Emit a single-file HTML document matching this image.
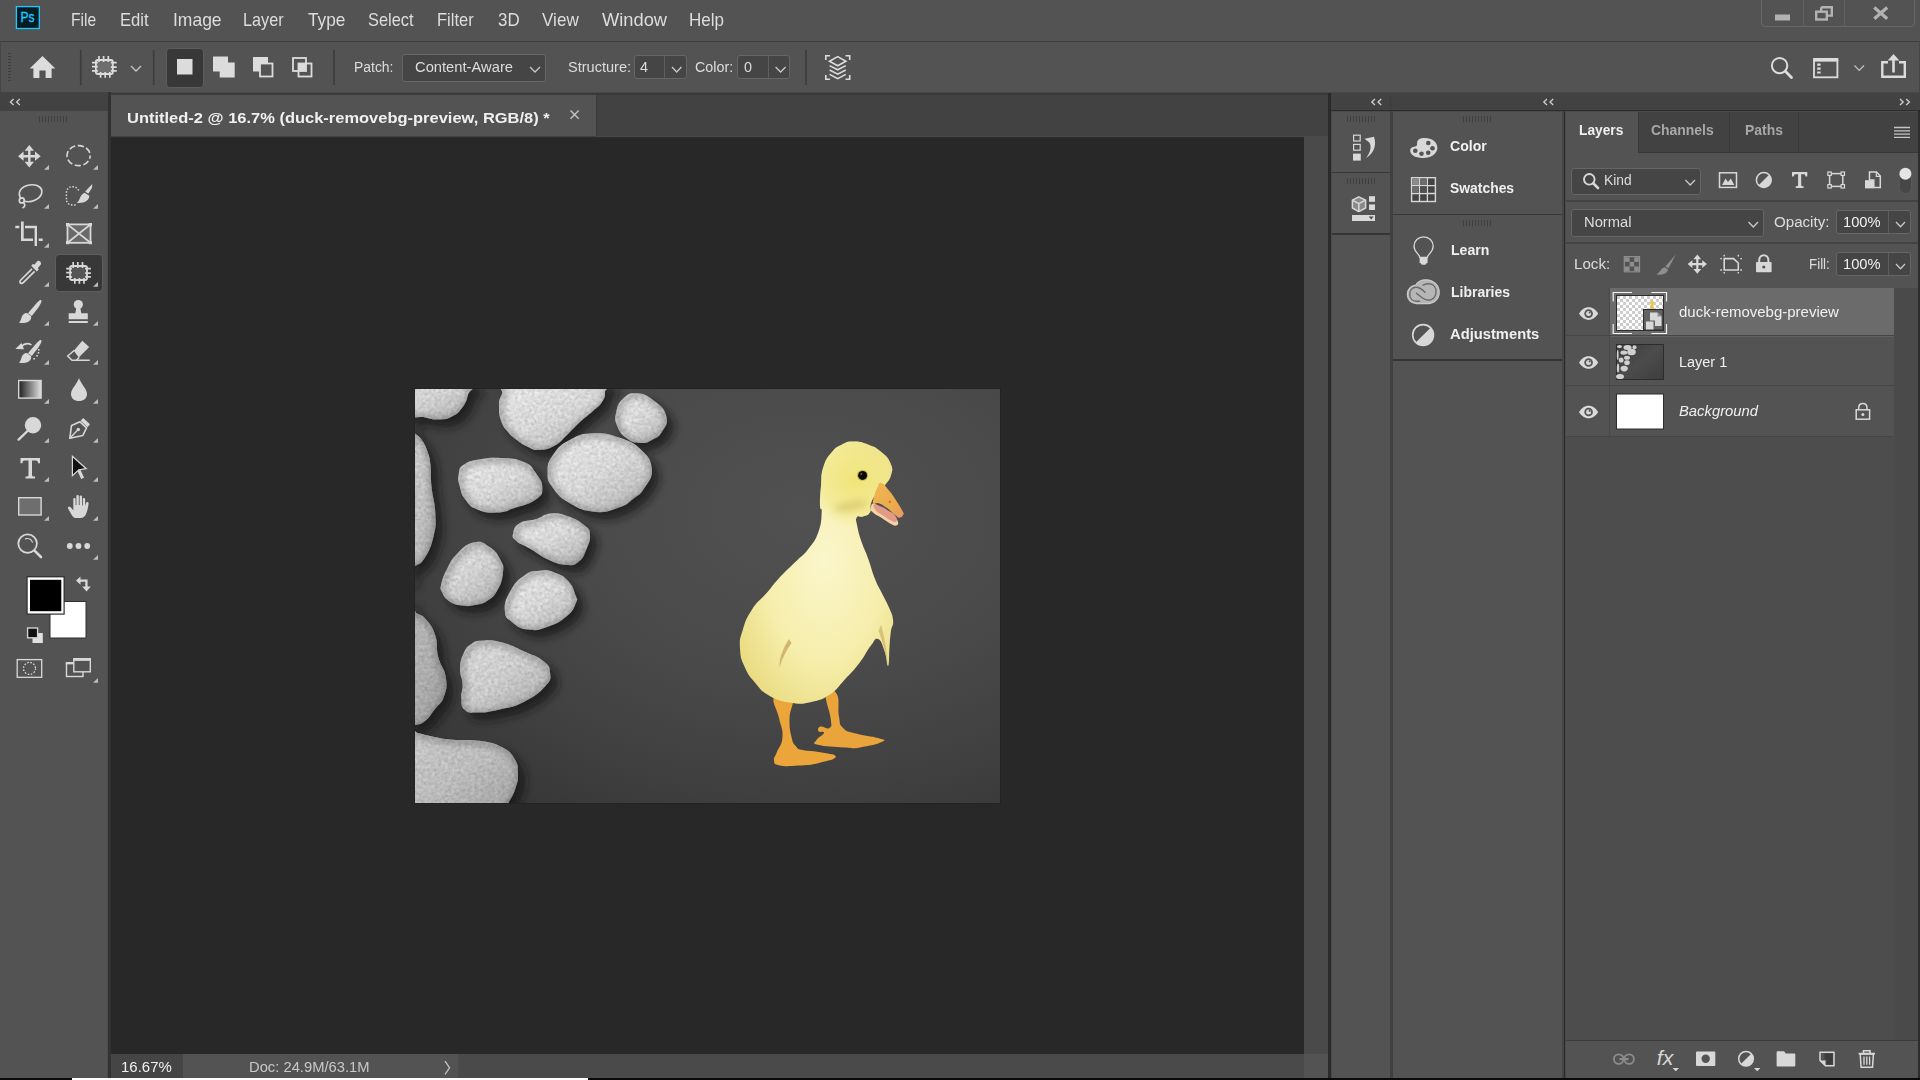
<!DOCTYPE html>
<html><head><meta charset="utf-8"><title>Photoshop</title>
<style>
*{margin:0;padding:0;box-sizing:border-box}
html,body{width:1920px;height:1080px;overflow:hidden;background:#535353;font-family:"Liberation Sans",sans-serif;color:#dcdcdc}
.a{position:absolute}
.t{position:absolute;white-space:nowrap;line-height:20px;transform-origin:0 50%}
.b{font-weight:bold}
.fld{position:absolute;background:#454545;border:1px solid #666;border-radius:3px}
svg{position:absolute;left:0;top:0;overflow:visible}
</style></head><body>
<!-- ===== base layout ===== -->
<div class="a" style="left:0;top:41px;width:1920px;height:1px;background:#3e3e3e"></div>
<div class="a" style="left:0;top:42px;width:1px;height:50px;background:#464646"></div>
<div class="a" style="left:1919px;top:42px;width:1px;height:50px;background:#464646"></div>
<!-- line under options bar -->
<div class="a" style="left:0;top:92px;width:1920px;height:1px;background:#484848"></div>
<div class="a" style="left:108px;top:93px;width:1221px;height:2px;background:#3a3a3a"></div>
<!-- toolbar header -->
<div class="a" style="left:0;top:92px;width:108px;height:19px;background:#424242"></div>
<div class="a" style="left:107px;top:111px;width:1px;height:967px;background:#4d4d4d"></div>
<div class="a" style="left:108px;top:92px;width:3px;height:988px;background:#323232"></div>
<!-- document tab bar -->
<div class="a" style="left:111px;top:95px;width:1218px;height:41px;background:#424242"></div>
<div class="a" style="left:111px;top:95px;width:485px;height:41px;background:#535353"></div>
<div class="a" style="left:596px;top:95px;width:1px;height:41px;background:#3a3a3a"></div>
<div class="a" style="left:111px;top:136px;width:1218px;height:1px;background:#4a4a4a"></div>
<div class="a" style="left:111px;top:136px;width:486px;height:1px;background:#404040"></div>
<div class="a" style="left:111px;top:137px;width:1193px;height:1px;background:#2c2c2c"></div>
<!-- canvas -->
<div class="a" style="left:111px;top:138px;width:1193px;height:916px;background:#282828"></div>
<!-- scrollbars -->
<div class="a" style="left:1304px;top:137px;width:24px;height:917px;background:#4a4a4a"></div>
<div class="a" style="left:458px;top:1054px;width:846px;height:24px;background:#4a4a4a"></div>
<div class="a" style="left:111px;top:1054px;width:72px;height:24px;background:#454545"></div>
<!-- column divider canvas | panels -->
<div class="a" style="left:1328px;top:93px;width:3px;height:987px;background:#2a2a2a"></div>
<div class="a" style="left:1331px;top:112px;width:1px;height:968px;background:#4a4a4a"></div>
<!-- collapsed strip 1 header -->
<div class="a" style="left:1331px;top:93px;width:589px;height:17px;background:#424242"></div>
<div class="a" style="left:1331px;top:110px;width:589px;height:1px;background:#2c2c2c"></div>
<div class="a" style="left:1331px;top:111px;width:589px;height:1px;background:#4a4a4a"></div>
<div class="a" style="left:1390px;top:97px;width:1px;height:13px;background:#3c3c3c"></div>
<div class="a" style="left:1332px;top:172px;width:58px;height:1px;background:#383838"></div>
<div class="a" style="left:1332px;top:233px;width:58px;height:2px;background:#353535"></div>
<!-- divider strip1 | panel2 -->
<div class="a" style="left:1390px;top:111px;width:3px;height:969px;background:#404040"></div>
<!-- panel 2 header -->
<div class="a" style="left:1393px;top:214px;width:169px;height:1px;background:#383838"></div>
<div class="a" style="left:1393px;top:359px;width:169px;height:2px;background:#353535"></div>
<!-- divider panel2 | layers -->
<div class="a" style="left:1562px;top:111px;width:2px;height:969px;background:#454545"></div>
<div class="a" style="left:1564px;top:111px;width:1px;height:969px;background:#2a2a2a"></div>
<div class="a" style="left:1565px;top:111px;width:1px;height:969px;background:#4a4a4a"></div>
<!-- layers panel header -->
<!-- layers tab row -->
<div class="a" style="left:1566px;top:112px;width:352px;height:41px;background:#424242"></div>
<div class="a" style="left:1566px;top:112px;width:72px;height:41px;background:#535353"></div>
<div class="a" style="left:1638px;top:112px;width:1px;height:40px;background:#383838"></div>
<div class="a" style="left:1729px;top:112px;width:1px;height:40px;background:#383838"></div>
<div class="a" style="left:1798px;top:112px;width:1px;height:40px;background:#383838"></div>
<div class="a" style="left:1638px;top:152px;width:280px;height:1px;background:#383838"></div>
<!-- layers panel right edge -->
<div class="a" style="left:1918px;top:111px;width:2px;height:969px;background:#2c2c2c"></div>
<!-- separators in layers panel -->
<div class="a" style="left:1566px;top:200px;width:352px;height:2px;background:#434343"></div>
<div class="a" style="left:1566px;top:242px;width:352px;height:2px;background:#434343"></div>
<!-- layer list area -->
<div class="a" style="left:1566px;top:288px;width:352px;height:752px;background:#4d4d4d"></div>
<div class="a" style="left:1894px;top:288px;width:24px;height:752px;background:#4a4a4a"></div>
<div class="a" style="left:1566px;top:288px;width:328px;height:148px;background:#535353"></div>
<div class="a" style="left:1610px;top:288px;width:284px;height:47px;background:#6b6b6b"></div>
<div class="a" style="left:1609px;top:288px;width:1px;height:148px;background:#484848"></div>
<div class="a" style="left:1566px;top:335px;width:328px;height:1px;background:#474747"></div>
<div class="a" style="left:1610px;top:336px;width:284px;height:1px;background:#626262"></div>
<div class="a" style="left:1566px;top:385px;width:328px;height:1px;background:#454545"></div>
<div class="a" style="left:1566px;top:436px;width:328px;height:1px;background:#454545"></div>
<!-- layers bottom bar -->
<div class="a" style="left:1566px;top:1040px;width:352px;height:1px;background:#3a3a3a"></div>
<div class="a" style="left:1566px;top:1041px;width:352px;height:37px;background:#535353"></div>
<!-- bottom black line + white stripe -->
<div class="a" style="left:0;top:1078px;width:1920px;height:2px;background:#0a0a0a"></div>
<div class="a" style="left:72px;top:1078px;width:516px;height:2px;background:#fff"></div>
<!-- ===== icons: menu bar + options bar ===== -->
<div class="fld" style="left:402px;top:54px;width:144px;height:28px"></div>
<div class="fld" style="left:634px;top:55px;width:53px;height:24px"></div>
<div class="a" style="left:664px;top:56px;width:1px;height:24px;background:#5e5e5e"></div>
<div class="fld" style="left:737px;top:55px;width:53px;height:24px"></div>
<div class="a" style="left:768px;top:56px;width:1px;height:24px;background:#5e5e5e"></div>
<div class="a" style="left:166px;top:48px;width:38px;height:40px;background:#383838;border:1px solid #5c5c5c;border-radius:4px"></div>
<svg width="1920" height="140" viewBox="0 0 1920 140">
<!-- Ps logo -->
<rect x="16.4" y="6.6" width="22.9" height="21.9" fill="#001d26" stroke="#1fc8fb" stroke-width="1.3"/>
<text x="20.6" y="22" font-family="Liberation Sans" font-size="14.8" fill="#1fc8fb" stroke="#1fc8fb" stroke-width="0.35" textLength="14" lengthAdjust="spacingAndGlyphs">Ps</text>
<!-- window controls -->
<path d="M1761.5 -1 V23 Q1761.5 26.5 1765 26.5 H1911 Q1914.5 26.5 1914.5 23 V-1" fill="none" stroke="#686868" stroke-width="1"/>
<path d="M1803.5 0 V26 M1844.5 0 V26" stroke="#626262" stroke-width="1"/>
<rect x="1775" y="14.5" width="15" height="6" fill="#b2b2b2"/>
<path d="M1821.2 7.2 H1831.8 V15.6 H1828 M1821.2 7.2 V11" fill="none" stroke="#b2b2b2" stroke-width="2.4"/>
<rect x="1816.2" y="11.7" width="10.6" height="7.8" fill="none" stroke="#b2b2b2" stroke-width="2.4"/>
<path d="M1874.3 7.5 L1887.2 18.7 M1887.2 7.5 L1874.3 18.7" stroke="#b2b2b2" stroke-width="3.2"/>
<!-- options grip -->
<path d="M8 53.5h3M8 56.5h3M8 59.5h3M8 62.5h3M8 65.5h3M8 68.5h3M8 71.5h3M8 74.5h3M8 77.5h3M8 80.5h3" stroke="#3e3e3e" stroke-width="1"/>
<!-- separators -->
<path d="M80.7 50V85M153.7 50V85M334 50V85M806 50V85" stroke="#3c3c3c" stroke-width="1.6"/>
<!-- home -->
<path d="M42.5 56 L55.3 68.6 H51.6 V78 H45.6 V70.4 H39.4 V78 H33.4 V68.6 H29.7 Z" fill="#dcdcdc"/>
<!-- patch tool icon (options) -->
<g id="patchico" stroke="#dcdcdc" stroke-width="1.7" fill="none">
<rect x="95.9" y="60" width="16.9" height="14" rx="1.8" fill="#6e6e6e" stroke-width="1.8"/>
<path d="M99 56V62M103.6 56V62M108.3 56V62M100.6 72V77.8M105.2 72V77.8M109.8 72V77.8M92 62.7H97.8M92 66.6H97.8M92 70.9H97.8M110.9 62.7H116.7M110.9 67.2H116.7M110.9 70.9H116.7"/>
</g>
<path d="M131 66 L136 71 L141 66" fill="none" stroke="#c8c8c8" stroke-width="1.3"/>
<!-- selection mode buttons -->
<rect x="177" y="59" width="15.5" height="15.5" fill="#dcdcdc"/>
<path d="M213 56.5h15v6h6.7v15h-15v-6H213z" fill="#dcdcdc"/>
<rect x="253" y="57" width="15" height="14.5" fill="#dcdcdc"/>
<rect x="260" y="63.5" width="12.5" height="13" fill="#535353" stroke="#dcdcdc" stroke-width="1.8"/>
<rect x="298.5" y="63.5" width="7.5" height="7.5" fill="#dcdcdc"/>
<rect x="293" y="58" width="13" height="13" fill="none" stroke="#dcdcdc" stroke-width="1.8"/>
<rect x="298.5" y="63.5" width="13" height="13" fill="none" stroke="#dcdcdc" stroke-width="1.8"/>
<!-- dropdown chevrons -->
<path d="M530 67 L535 72 L540 67 M672 67 L676.7 72 L681.4 67 M775.6 67 L780.6 72 L785.6 67" fill="none" stroke="#c8c8c8" stroke-width="1.3"/>
<!-- sample all layers icon -->
<g fill="none" stroke="#dcdcdc" stroke-width="1.6">
<path d="M825.8 60V55.8H830M845.5 55.8H849.7V60M825.8 75V79.2H830M845.5 79.2H849.7V75"/>
<path d="M837.7 56.6 L845.9 61.2 L837.7 65.8 L829.5 61.2 Z"/>
<path d="M829.6 65.6 L837.7 69.8 L845.8 65.6M829.6 70 L837.7 74.2 L845.8 70M829.6 74.4 L837.7 78.6 L845.8 74.4"/>
</g>
<!-- right side: search / workspace / share -->
<circle cx="1779.6" cy="65.6" r="7.7" fill="none" stroke="#dcdcdc" stroke-width="2"/>
<path d="M1785.3 71.3 L1791.5 77.6" stroke="#dcdcdc" stroke-width="2.8" stroke-linecap="round"/>
<rect x="1814" y="60.5" width="23.4" height="16.8" fill="none" stroke="#dcdcdc" stroke-width="1.8"/>
<rect x="1813.1" y="58" width="25.2" height="3.4" fill="#dcdcdc"/>
<path d="M1817.2 64.7h3.4M1817.2 68.6h3.4M1817.2 72.5h3.4" stroke="#dcdcdc" stroke-width="2.2"/>
<path d="M1854.5 65.5 L1859.2 70.4 L1864 65.5" fill="none" stroke="#c0c0c0" stroke-width="1.3"/>
<path d="M1888 62.2 H1882.3 V76.8 H1904.8 V62.2 H1899" fill="none" stroke="#dcdcdc" stroke-width="2.4"/>
<path d="M1893.5 72.5 V58" stroke="#dcdcdc" stroke-width="2.6"/>
<path d="M1893.5 54 L1899.3 60.6 H1887.7 Z" fill="#dcdcdc"/>
<!-- doc tab close -->
<path d="M570.5 110.5 L578.7 118.7 M578.7 110.5 L570.5 118.7" stroke="#c4c4c4" stroke-width="1.4"/>
<!-- collapse chevrons -->
<g fill="none" stroke="#d0d0d0" stroke-width="1.3">
<path d="M13.6 99 L10.4 102 L13.6 105 M19.8 99 L16.6 102 L19.8 105"/>
<path d="M1375 99 L1371.8 102 L1375 105 M1381.2 99 L1378 102 L1381.2 105"/>
<path d="M1547 99 L1543.8 102 L1547 105 M1553.2 99 L1550 102 L1553.2 105"/>
<path d="M1900 99 L1903.2 102 L1900 105 M1906.2 99 L1909.4 102 L1906.2 105"/>
</g>
<!-- grips -->
<g stroke="#3f3f3f" stroke-width="1">
<path d="M39.5 116v6M42.5 116v6M45.5 116v6M48.5 116v6M51.5 116v6M54.5 116v6M57.5 116v6M60.5 116v6M63.5 116v6M66.5 116v6"/>
<path d="M1347.5 116v6M1350.5 116v6M1353.5 116v6M1356.5 116v6M1359.5 116v6M1362.5 116v6M1365.5 116v6M1368.5 116v6M1371.5 116v6M1374.5 116v6"/>
<path d="M1463.5 116v6M1466.5 116v6M1469.5 116v6M1472.5 116v6M1475.5 116v6M1478.5 116v6M1481.5 116v6M1484.5 116v6M1487.5 116v6M1490.5 116v6"/>
</g>
</svg>
<svg id="statuschev" width="1920" height="1080" viewBox="0 0 1920 1080"><path d="M445 1061.200 L449.600 1067.800 L445 1074.400" fill="none" stroke="#c8c8c8" stroke-width="1.200"/></svg>
<!-- ===== icons: left toolbar ===== -->
<div class="a" style="left:55px;top:254px;width:48px;height:38px;background:#383838;border:1px solid #5e5e5e;border-radius:4px"></div>
<svg width="120" height="700" viewBox="0 0 120 700">
<defs>
<path id="tri" d="M0 4.7 H5 V0 Z" fill="#bdbdbd"/>
<linearGradient id="gradtool" x1="0" x2="1" y1="0" y2="0"><stop offset="0" stop-color="#1e1e1e"/><stop offset="1" stop-color="#e0e0e0"/></linearGradient>
</defs>
<g fill="#d8d8d8">
<!-- corner triangles -->
<use href="#tri" x="44" y="165"/><use href="#tri" x="93" y="165"/>
<use href="#tri" x="44" y="204"/><use href="#tri" x="93" y="204"/>
<use href="#tri" x="44" y="243"/>
<use href="#tri" x="44" y="282"/><use href="#tri" x="93" y="282"/>
<use href="#tri" x="44" y="321"/><use href="#tri" x="93" y="321"/>
<use href="#tri" x="44" y="360"/><use href="#tri" x="93" y="360"/>
<use href="#tri" x="44" y="399"/><use href="#tri" x="93" y="399"/>
<use href="#tri" x="44" y="438"/><use href="#tri" x="93" y="438"/>
<use href="#tri" x="44" y="477"/><use href="#tri" x="93" y="477"/>
<use href="#tri" x="44" y="516"/><use href="#tri" x="93" y="516"/>
<use href="#tri" x="93" y="555"/>
<use href="#tri" x="93" y="678"/>
<!-- 1 move -->
<path d="M29.3 145 L34 150.8 H30.5 V155 H35 V151.6 L40.7 156.2 L35 160.8 V157.4 H30.5 V161.8 H34 L29.3 167.5 L24.6 161.8 H28.1 V157.4 H23.6 V160.8 L18 156.2 L23.6 151.6 V155 H28.1 V150.8 H24.6 Z"/>
<!-- 2 elliptical marquee -->
<ellipse cx="78.6" cy="155.6" rx="11.6" ry="10" fill="none" stroke="#d8d8d8" stroke-width="1.6" stroke-dasharray="6.2 2.6" stroke-dashoffset="3"/>
<!-- 3 lasso -->
<g fill="none" stroke="#d8d8d8" stroke-width="1.7">
<path d="M21.5 199 C16.5 193 20.5 186.5 29.5 185 C38 183.700 43 188 41.600 193.500 C40 199 31 203.500 23.500 201"/>
<circle cx="21.800" cy="200.400" r="2.500"/>
<path d="M23.200 202.400 C25.500 204.500 25.500 206.500 22.500 208"/>
</g>
<!-- 4 quick selection -->
<path d="M78.600 190.600 C77.600 187.600 74.600 186.400 71.500 186.700 C68 187.100 66.400 190 66.400 193.500 V199 C66.400 202.500 68.600 204.900 72 204.900 H76" fill="none" stroke="#d8d8d8" stroke-width="1.500" stroke-dasharray="1.500 1.650"/>
<path d="M92.300 184.100 L92 187.800 L88.300 193.700 L85.100 191.600 Z"/>
<path d="M84.600 192.700 L89.300 195.800 C89.600 200 84.600 203.800 76.500 202.900 C80.500 200.600 79.300 194.800 84.600 192.700 Z"/>
<!-- 5 crop -->
<path d="M21 221.500 H23.700 V238.500 H33 V241 H21 Z M15.300 225.700 H19.300 V228.300 H15.300 Z M25 225.700 H37 V246 H34.600 V228.300 H25 Z M38.700 238.500 H42.700 V241 H38.700 Z"/>
<!-- 6 frame -->
<g stroke="#d8d8d8" stroke-width="1.800" fill="none">
<rect x="67.500" y="224.400" width="23" height="18.400" fill="#6a6a6a"/>
<path d="M67.500 224.400 L90.500 242.800 M90.500 224.400 L67.500 242.800"/>
</g>
<path d="M66 223h3.200v3.200H66z M88.800 223H92v3.200h-3.200z M66 241h3.200v3.200H66z M88.800 241H92v3.200h-3.200z"/>
<!-- 7 eyedropper -->
<path d="M37.500 261 C39.500 260.300 41.500 262.300 41 264.300 L37.800 268.200 L38.800 269.400 L36.800 271.400 L31.200 265.800 L33.200 263.800 L34.300 264.800 Z"/>
<path d="M32 268.800 L20.800 280 C19.600 281.200 19.800 282.600 20.500 283 C21.200 283.600 22.500 283.300 23.500 282.300 L34.600 271.300" fill="none" stroke="#d8d8d8" stroke-width="1.700"/>
<!-- 8 patch (selected) -->
<g stroke="#d8d8d8" stroke-width="1.700" fill="none" transform="translate(-25.800 206)">
<rect x="95.900" y="60" width="16.900" height="14" rx="1.800" fill="#555" stroke-width="1.800"/>
<path d="M99 56V62M103.600 56V62M108.300 56V62M100.600 72V77.800M105.200 72V77.800M109.800 72V77.800M92 62.700H97.800M92 66.600H97.800M92 70.900H97.800M110.900 62.700H116.700M110.900 67.200H116.700M110.900 70.900H116.700"/>
</g>
<!-- 9 brush -->
<path id="brush" d="M41.200 300 C42.200 300.800 40.800 304 38.600 307.200 L31.800 316 L28 313.300 L35.600 304.200 C38 301.400 40.200 299.400 41.200 300 Z M25.800 313.100 C27 312.900 27.600 313.400 28.200 313.900 L31 316 C32.400 320.800 27 323.900 19 322.800 C21.800 321 20.800 314.200 25.800 313.100 Z"/>
<!-- 10 stamp -->
<circle cx="78.300" cy="304.600" r="4.600"/>
<path d="M76.300 308 H80.300 L81.300 313.200 H87.800 V319.300 H68.700 V313.200 H75.300 Z M68.700 321 H87.800 V323 H68.700 Z"/>
<!-- 11 history brush -->
<use href="#brush" y="40"/>
<path d="M15.300 349 L21.500 343 L24 349.300 Z"/>
<path d="M21.500 346.600 C24 343.600 28 343 31.500 344.800" fill="none" stroke="#d8d8d8" stroke-width="1.500"/>
<rect x="37.900" y="349" width="1.600" height="1.600"/><rect x="37.700" y="352" width="1.600" height="1.600"/><rect x="36.200" y="355" width="1.600" height="1.600"/><rect x="33.300" y="358" width="1.600" height="1.600"/>
<!-- 12 eraser -->
<path d="M82.300 340.800 L89.200 347 L78.800 357.400 L73.800 350.800 Z"/>
<path d="M74.400 350.300 L67.700 356 L72 360.300 H89.800 M79.200 357.200 L76.300 360.300" fill="none" stroke="#d8d8d8" stroke-width="1.500"/>
<!-- 13 gradient -->
<rect x="18.700" y="380.500" width="22.400" height="17.600" fill="url(#gradtool)" stroke="#d8d8d8" stroke-width="1.400"/>
<!-- 14 drop -->
<path d="M79 378 C81 384 87 389 87 394 C87 398.500 83.500 401 79 401 C74.500 401 71 398.500 71 394 C71 389 77 384 79 378 Z"/>
<!-- 15 dodge -->
<circle cx="33" cy="425.200" r="8.200"/>
<path d="M27.500 431 L18.600 439.600" stroke="#d8d8d8" stroke-width="2.400" stroke-linecap="round"/>
<!-- 16 pen -->
<path d="M83.200 418 L90 424.300 L87.500 427.200 L80.600 420.800 Z"/>
<path d="M80 421.800 L86.500 427.800 L82.800 435.500 L69.800 438.300 L71.500 425.600 Z" fill="none" stroke="#d8d8d8" stroke-width="1.600" stroke-linejoin="round"/>
<path d="M70 438 L77.500 430.300" stroke="#d8d8d8" stroke-width="1.300"/>
<circle cx="78.300" cy="429.500" r="1.700"/>
<!-- 17 type -->
<path d="M20.500 458 H40 V463.300 H38 C37.900 461.300 37.300 460.600 35.700 460.600 H32 V475 C32 476.300 32.700 476.600 35 476.600 V478.600 H25.500 V476.600 C27.800 476.600 28.500 476.300 28.500 475 V460.600 H24.800 C23.200 460.600 22.600 461.300 22.500 463.300 H20.500 Z"/>
<!-- 18 path selection -->
<path d="M79 470.400 L82.600 478.400" stroke="#d8d8d8" stroke-width="3.200" fill="none"/>
<path d="M72.400 456.300 L86.200 468.700 L78.800 469.800 L72.400 475.600 Z" fill="#111" stroke="#d8d8d8" stroke-width="1.200"/>
<!-- 19 rectangle -->
<rect x="18.700" y="497.700" width="22.400" height="17.300" fill="#6e6e6e" stroke="#d8d8d8" stroke-width="1.400"/>
<!-- 20 hand -->
<path d="M74.800 518 C72.500 517 71.500 514.500 69.800 511.500 C68.600 509.400 67.500 508 68 507.200 C68.800 506.200 70.300 506.800 71.400 508 L73.300 510.400 V499.300 C73.300 497.600 75.600 497.600 75.600 499.300 V505 H76.400 V496.300 C76.400 494.500 78.800 494.500 78.800 496.300 V505 H79.600 V496.800 C79.600 495 82 495 82 496.800 V505.400 H82.800 V499.300 C82.800 497.600 85.100 497.600 85.100 499.300 V505.800 L86 503 C86.600 501.200 88.800 501.800 88.600 503.600 C88.200 507.500 87.200 511.500 85.800 514.500 C84.800 516.600 83 518 80.800 518 Z"/>
<!-- 21 zoom -->
<circle cx="27.600" cy="543.600" r="9.300" fill="none" stroke="#d8d8d8" stroke-width="1.800"/>
<path d="M34.500 550.600 L41 557" stroke="#d8d8d8" stroke-width="2.600" stroke-linecap="round"/>
<path d="M25 538.800 C28.500 537.800 31.500 539.500 32.600 542.500" fill="none" stroke="#d8d8d8" stroke-width="1.200"/>
<!-- 22 dots -->
<circle cx="69.800" cy="546" r="2.900"/><circle cx="78.500" cy="546" r="2.900"/><circle cx="87.200" cy="546" r="2.900"/>
</g>
<!-- color swatches -->
<rect x="50" y="601.500" width="36" height="36.500" fill="#fff" stroke="#2e2e2e" stroke-width="1"/>
<rect x="26.500" y="576.200" width="38.200" height="38.500" fill="#2e2e2e"/>
<rect x="27.700" y="577.400" width="35.800" height="36.100" fill="#fff"/>
<rect x="30" y="579.800" width="31.300" height="31.400" fill="#000"/>
<!-- default colors -->
<rect x="32.500" y="633" width="10.300" height="10" fill="#e0e0e0"/>
<rect x="27.600" y="628" width="10" height="9.800" fill="#111" stroke="#d0d0d0" stroke-width="1.400"/>
<!-- swap -->
<g fill="#d8d8d8">
<path d="M76 580.600 L80.500 576.500 V579.500 H87.600 V586.500 H90.800 L86.500 591.500 L82.200 586.500 H85.300 V581.800 H80.500 V584.800 Z"/>
</g>
<!-- quick mask -->
<rect x="17.200" y="659.600" width="24.500" height="17.700" fill="none" stroke="#d8d8d8" stroke-width="1.300"/>
<circle cx="29.500" cy="668.400" r="6" fill="none" stroke="#d8d8d8" stroke-width="1.300" stroke-dasharray="1.600 1.550"/>
<!-- screen mode -->
<rect x="66.500" y="663.500" width="16.500" height="13" fill="none" stroke="#d8d8d8" stroke-width="1.400"/>
<rect x="73.800" y="660" width="16.500" height="11.800" fill="#535353" stroke="#d8d8d8" stroke-width="1.400"/>
<rect x="73.100" y="658" width="17.900" height="2.600" fill="#d8d8d8"/>
<rect x="65.800" y="662" width="7.500" height="2.200" fill="#d8d8d8"/>
</svg>
<!-- ===== icons: collapsed strips + Color/Swatches/Learn/... panel ===== -->
<svg width="1920" height="400" viewBox="0 0 1920 400">
<g stroke="#3f3f3f" stroke-width="1">
<path d="M1347.5 178v6M1350.5 178v6M1353.5 178v6M1356.5 178v6M1359.5 178v6M1362.5 178v6M1365.5 178v6M1368.5 178v6M1371.5 178v6M1374.5 178v6"/>
<path d="M1463.5 220v6M1466.5 220v6M1469.5 220v6M1472.5 220v6M1475.5 220v6M1478.5 220v6M1481.5 220v6M1484.5 220v6M1487.5 220v6M1490.5 220v6"/>
</g>
<g fill="#d8d8d8">
<!-- history icon -->
<rect x="1353.600" y="135.200" width="6.600" height="5.800" fill="none" stroke="#d8d8d8" stroke-width="1.200"/>
<rect x="1353.600" y="144.400" width="6.600" height="5.800" fill="none" stroke="#d8d8d8" stroke-width="1.200"/>
<rect x="1353" y="153.600" width="7.800" height="7" />
<path d="M1364.500 138.700 L1374 136.800 C1376.200 143 1375.500 152.500 1366 158.200 C1370.500 152.500 1371.800 146.500 1369.300 142.600 Z"/>
<!-- 3D icon -->
<g fill="none" stroke="#d8d8d8" stroke-width="1.500" stroke-linejoin="round">
<path d="M1358.800 196.800 L1365.600 200.200 V208 L1358.800 211.600 L1352.400 208 V200.200 Z" fill="#8a8a8a"/>
<path d="M1352.400 200.200 L1358.800 203.600 L1365.600 200.200 M1358.800 203.600 V211.600"/>
</g>
<rect x="1369" y="196.200" width="6" height="5.600"/>
<rect x="1369" y="204.400" width="6" height="5.600"/>
<rect x="1352" y="215" width="23" height="6"/>
<path d="M1368.800 216.500 H1373.600 L1371.200 219.600 Z" fill="#444"/>
<!-- Color palette -->
<path d="M1423.500 138 C1431.500 137.600 1437.600 141.800 1437.400 148 C1437.200 154 1430.500 158.200 1422.600 158 C1415 157.800 1409.800 154.500 1410.200 150.200 C1410.500 147 1413.800 146.800 1415.800 146.200 C1418 145.500 1416.500 143.200 1417.500 141 C1418.400 139 1420.800 138.100 1423.500 138 Z"/>
<g fill="#535353">
<circle cx="1415.300" cy="150.700" r="2.300"/><circle cx="1421.500" cy="153.800" r="2.300"/><circle cx="1428.200" cy="152.800" r="2.300"/><circle cx="1432.500" cy="148.200" r="2.300"/><circle cx="1428.300" cy="143" r="2.300"/>
</g>
<!-- Swatches grid -->
<rect x="1411.600" y="177.700" width="23.800" height="23.800" fill="#444" stroke="#d8d8d8" stroke-width="1.400"/>
<path d="M1419.500 177.700 V201.500 M1427.400 177.700 V201.500 M1411.600 185.600 H1435.400 M1411.600 193.500 H1435.400" stroke="#d8d8d8" stroke-width="1.300" fill="none"/>
<rect x="1412.400" y="178.500" width="6.400" height="6.400" fill="#8c8c8c"/><rect x="1420.200" y="178.500" width="6.500" height="6.400" fill="#6c6c6c"/>
<rect x="1412.400" y="186.300" width="6.400" height="6.500" fill="#6c6c6c"/><rect x="1420.200" y="186.300" width="6.500" height="6.500" fill="#505050"/>
<!-- Learn bulb -->
<path d="M1419.800 257.300 C1419.500 254.200 1414 252 1414 246.300 C1414 240.800 1418.300 236.800 1423.600 236.800 C1428.900 236.800 1433.200 240.800 1433.200 246.300 C1433.200 252 1427.700 254.200 1427.400 257.300 Z" fill="none" stroke="#d8d8d8" stroke-width="1.300"/>
<path d="M1419.600 257.300 H1427.600 V262.300 L1425.300 264.800 H1421.900 L1419.600 262.300 Z"/>
<!-- Libraries CC -->
<path d="M1416.200 303.600 C1411 303.600 1407.300 299.600 1407.300 294.300 C1407.300 289.400 1410.800 285.600 1415.600 285.200 C1417.500 281.800 1421.500 279.700 1426.300 279.800 C1433.500 280 1439.200 285.300 1439.200 292.300 C1439.200 298.800 1434.300 303.600 1428 303.600 Z" fill="#b6b6b6" stroke="#cacaca" stroke-width="1.200"/>
<g fill="none" stroke="#6a6a6a" stroke-width="1.400" stroke-linecap="round">
<path d="M1425 292.300 C1421.500 288.500 1419 287.200 1416 287.200 C1412 287.200 1409.800 290.500 1409.800 294.500 C1409.800 298.500 1412.500 301.200 1416.500 301.200 H1419.500"/>
<path d="M1423 285.200 C1425 284.200 1427 283.800 1429 283.800 C1433.500 283.800 1436 287.500 1436 292 C1436 296.500 1433 300.200 1428.500 300.200 C1424 300.200 1420.500 296.500 1416.500 293.200"/>
</g>
<!-- Adjustments -->
<circle cx="1423.100" cy="335" r="10.400" fill="none" stroke="#d8d8d8" stroke-width="1.600"/>
<path d="M1430.600 327.800 A10.400 10.400 0 0 1 1415.700 342.400 Z"/>
</g>
</svg>
<!-- ===== Layers panel widgets ===== -->
<div class="fld" style="left:1571px;top:168px;width:130px;height:27px"></div>
<div class="fld" style="left:1571px;top:209px;width:193px;height:28px"></div>
<div class="fld" style="left:1836px;top:210px;width:75px;height:24px"></div>
<div class="a" style="left:1888px;top:211px;width:1px;height:24px;background:#5e5e5e"></div>
<div class="fld" style="left:1836px;top:252px;width:75px;height:24px"></div>
<div class="a" style="left:1888px;top:253px;width:1px;height:24px;background:#5e5e5e"></div>
<svg width="1920" height="1080" viewBox="0 0 1920 1080">
<defs>
<pattern id="chk" x="1617" y="296" width="6" height="6" patternUnits="userSpaceOnUse"><rect width="6" height="6" fill="#fff"/><rect width="3" height="3" fill="#ccc"/><rect x="3" y="3" width="3" height="3" fill="#ccc"/></pattern>
<linearGradient id="l1bg" x1="0" y1="0" x2="1" y2="1"><stop offset="0" stop-color="#3c3c3c"/><stop offset="0.5" stop-color="#4c4c4c"/><stop offset="1" stop-color="#3e3e3e"/></linearGradient>
<g id="eye"><path d="M0 0 C3 -4.800 6.500 -6.300 9.600 -6.300 C12.700 -6.300 16.200 -4.800 19.200 0 C16.200 4.800 12.700 6.300 9.600 6.300 C6.500 6.300 3 4.800 0 0 Z" fill="#dadada"/><circle cx="9.600" cy="0" r="4.300" fill="#535353"/><circle cx="9.600" cy="0" r="2.500" fill="#dadada"/><circle cx="10.600" cy="-1" r="1" fill="#535353"/></g>
</defs>
<!-- panel menu -->
<path d="M1894 127.500h16M1894 130.800h16M1894 134.100h16M1894 137.400h16" stroke="#c4c4c4" stroke-width="1.300"/>
<g fill="#d8d8d8">
<!-- kind search -->
<circle cx="1589.300" cy="179.300" r="5.300" fill="none" stroke="#d8d8d8" stroke-width="1.900"/>
<path d="M1593.200 183.300 L1598 188" stroke="#d8d8d8" stroke-width="2.600" stroke-linecap="round"/>
<path d="M1685.400 180 L1690.200 185 L1695 180 M1748.500 222 L1753.300 227 L1758 222 M1896 222 L1900.500 226.700 L1905 222 M1896 264 L1900.500 268.700 L1905 264" fill="none" stroke="#c8c8c8" stroke-width="1.300"/>
<!-- filter: pixel -->
<rect x="1719.500" y="172.800" width="17" height="14.600" fill="none" stroke="#d8d8d8" stroke-width="1.500"/>
<path d="M1722 185 L1725.600 178.500 L1728 182 L1730.800 178.500 L1734.300 185 Z"/>
<!-- filter: adjustment -->
<circle cx="1763.800" cy="180" r="7.400" fill="none" stroke="#d8d8d8" stroke-width="1.500"/>
<path d="M1769.200 174.800 A7.400 7.400 0 0 1 1758.600 185.300 Z"/>
<!-- filter: type -->
<path d="M1792 172 H1807.300 V176.600 H1805.500 C1805.400 174.800 1804.800 174.300 1803.400 174.300 H1801.200 V185 C1801.200 186 1801.800 186.300 1803.600 186.300 V188 H1795.700 V186.300 C1797.500 186.300 1798.100 186 1798.100 185 V174.300 H1795.900 C1794.500 174.300 1793.900 174.800 1793.800 176.600 H1792 Z"/>
<!-- filter: shape -->
<rect x="1829.600" y="173.600" width="13.200" height="12.800" fill="none" stroke="#d8d8d8" stroke-width="1.500"/>
<g fill="#535353" stroke="#d8d8d8" stroke-width="1.200"><rect x="1827.900" y="172" width="3.400" height="3.400"/><rect x="1841.100" y="172" width="3.400" height="3.400"/><rect x="1827.900" y="184.600" width="3.400" height="3.400"/><rect x="1841.100" y="184.600" width="3.400" height="3.400"/></g>
<!-- filter: smart object -->
<path d="M1869.500 172 H1876.500 L1880.300 176 V187.600 H1873.800 V180 H1869.500 Z" fill="none" stroke="#d8d8d8" stroke-width="1.500"/>
<path d="M1876.300 172 V176.300 H1880.300" fill="none" stroke="#d8d8d8" stroke-width="1.200"/>
<rect x="1865" y="180.200" width="8.600" height="8.200"/>
<!-- toggle -->
<rect x="1899.300" y="167.800" width="12.200" height="25.800" rx="6.100" fill="#474747" stroke="#5a5a5a" stroke-width="1"/>
<circle cx="1905.400" cy="173.700" r="6" fill="#e4e4e4"/>
<!-- lock: transparency -->
<rect x="1624.300" y="256.600" width="15.200" height="15.200" fill="#535353" stroke="#8e8e8e" stroke-width="1.200"/>
<g fill="#8e8e8e"><rect x="1625" y="257.300" width="4.600" height="4.600"/><rect x="1634.200" y="257.300" width="4.600" height="4.600"/><rect x="1629.600" y="261.900" width="4.600" height="4.600"/><rect x="1625" y="266.500" width="4.600" height="4.600"/><rect x="1634.200" y="266.500" width="4.600" height="4.600"/></g>
<!-- lock: paint -->
<g fill="#8e8e8e"><path d="M1676 254.300 L1668.500 268.200 L1665.300 266.400 Z"/><path d="M1664.600 267.200 L1668 269.200 C1667.500 273.500 1662.500 275.300 1656.300 274.600 C1660 272.800 1660.500 268.300 1664.600 267.200 Z"/></g>
<!-- lock: position -->
<path d="M1697.300 254.400 L1701.200 259.300 H1698.400 V263 H1702.200 V260.200 L1707 264.100 L1702.200 268 V265.200 H1698.400 V268.900 H1701.200 L1697.300 273.800 L1693.400 268.900 H1696.200 V265.200 H1692.400 V268 L1687.600 264.100 L1692.400 260.200 V263 H1696.200 V259.300 H1693.400 Z"/>
<!-- lock: artboard -->
<path d="M1724.200 258.600 H1733.500 L1738.300 263 V270 H1724.200 Z" fill="none" stroke="#d8d8d8" stroke-width="1.600"/>
<path d="M1720.300 258.600 H1722 M1740.300 258.600 H1742 M1724.200 254.800 V256.500 M1738.300 254.800 V256.500 M1720.300 270 H1722 M1740.300 270 H1742 M1724.200 272 V273.600 M1738.300 272 V273.600" stroke="#d8d8d8" stroke-width="1.400"/>
<!-- lock: all -->
<path d="M1759.200 263 V260.500 C1759.200 253.500 1768.400 253.500 1768.400 260.500 V263" fill="none" stroke="#d8d8d8" stroke-width="2"/>
<rect x="1756" y="262" width="15.600" height="10.200" rx="1"/>
<circle cx="1763.800" cy="267" r="1.600" fill="#535353"/>
</g>
<!-- eyes -->
<use href="#eye" x="1579" y="313.600"/><use href="#eye" x="1579" y="362.500"/><use href="#eye" x="1579" y="412"/>
<!-- thumb 1 -->
<rect x="1616" y="295" width="48" height="36" fill="#2c2c2c"/>
<rect x="1617" y="296" width="46" height="34" fill="url(#chk)"/>
<path d="M1650.300 301.800 C1651.800 299.800 1654.300 300.800 1653.800 303 L1654.800 304.300 L1653.400 304.600 L1654 309 H1650 L1651.200 305.200 C1650.300 304.300 1649.900 303 1650.300 301.800 Z" fill="#f0c24a"/>
<rect x="1643.500" y="309.500" width="19.500" height="20.500" fill="#626262" stroke="#2c2c2c" stroke-width="1"/>
<path d="M1650 312.500 H1657.500 L1661.500 316.500 V326 H1655 V320.500 H1650 Z" fill="#d8d8d8"/>
<path d="M1657.500 312.500 L1661.500 316.500 H1657.500 Z" fill="#8e8e8e"/>
<path d="M1646 321.500 H1653.500 V329.500 H1646 Z" fill="#d8d8d8"/>
<path d="M1613.200 301.500 V292.500 H1632 M1651.300 292.500 H1666.500 V301.500 M1613.200 324 V333.500 H1632 M1651.300 333.500 H1666.500 V324" fill="none" stroke="#f4f4f4" stroke-width="1.200"/>
<!-- thumb 2 -->
<rect x="1616" y="344" width="48" height="36" fill="#2c2c2c"/>
<rect x="1617" y="345" width="46" height="34" fill="url(#l1bg)"/>
<g fill="#d0d0d0">
<ellipse cx="1619.500" cy="346.500" rx="2.500" ry="1.500"/><ellipse cx="1627.500" cy="347.500" rx="4" ry="2.500"/><ellipse cx="1634.500" cy="347.300" rx="2" ry="2"/>
<ellipse cx="1631.500" cy="352" rx="4.300" ry="3.200"/><ellipse cx="1623.800" cy="352.600" rx="3.400" ry="2.200"/><ellipse cx="1617.700" cy="355" rx="0.900" ry="5"/>
<ellipse cx="1627" cy="357.700" rx="3" ry="2"/><ellipse cx="1621.200" cy="360" rx="2.400" ry="2.600"/><ellipse cx="1627" cy="362.700" rx="2.800" ry="2.400"/>
<ellipse cx="1618" cy="368" rx="1.200" ry="4.500"/><ellipse cx="1624.200" cy="368.600" rx="3.600" ry="2.800"/><ellipse cx="1620" cy="376.500" rx="4" ry="2.600"/>
</g>
<!-- thumb 3 -->
<rect x="1616" y="393.500" width="48" height="36" fill="#2c2c2c"/>
<rect x="1617" y="394.500" width="46" height="34" fill="#fff"/>
<!-- background lock -->
<path d="M1858.700 410 V407.800 C1858.700 402 1867 402 1867 407.800 V410" fill="none" stroke="#d8d8d8" stroke-width="1.500"/>
<rect x="1856.200" y="409.800" width="13.400" height="9.400" fill="none" stroke="#d8d8d8" stroke-width="1.500"/>
<circle cx="1862.900" cy="414.500" r="1.500" fill="#d8d8d8"/>
<!-- bottom bar icons -->
<g fill="#d8d8d8">
<g fill="none" stroke="#8c8c8c" stroke-width="1.800"><rect x="1613.900" y="1054.300" width="9.600" height="9.600" rx="4.800"/><rect x="1624.300" y="1054.300" width="9.600" height="9.600" rx="4.800"/><path d="M1619.500 1059.100 H1628.500" stroke-width="2.200"/></g>
<text x="1656.800" y="1065.200" font-family="Liberation Sans" font-style="italic" font-size="19.500" textLength="16.500" lengthAdjust="spacingAndGlyphs">fx</text>
<path d="M1672.600 1068 H1679 L1675.800 1071.200 Z M1754 1068 H1760.400 L1757.200 1071.200 Z"/>
<rect x="1696" y="1051.500" width="19.300" height="14.600" rx="1"/>
<circle cx="1705.700" cy="1058.800" r="4.200" fill="#535353"/>
<circle cx="1746" cy="1058.800" r="7.300" fill="none" stroke="#d8d8d8" stroke-width="1.500"/>
<path d="M1751.300 1053.700 A7.300 7.300 0 0 1 1740.800 1064 Z"/>
<path d="M1776.600 1052.300 C1776.600 1051.600 1777.100 1051.300 1777.600 1051.300 H1784 L1785.800 1053.500 H1794.300 C1795 1053.500 1795.300 1054 1795.300 1054.500 V1065.500 C1795.300 1066.200 1794.800 1066.500 1794.300 1066.500 H1777.600 C1777 1066.500 1776.600 1066 1776.600 1065.500 Z"/>
<path d="M1820 1052.200 H1834 V1065.800 H1825.500 L1820 1060.500 Z" fill="none" stroke="#d8d8d8" stroke-width="1.500"/>
<path d="M1820 1060.500 H1825.500 V1065.800 Z"/>
<path d="M1824.500 1053.500 H1832.800 V1064.500 H1826.500 V1059.500 H1824.500 Z" fill="#3c3c3c"/>
<path d="M1860.200 1054 H1873.400 L1872.500 1067.200 H1861.100 Z" fill="none" stroke="#d8d8d8" stroke-width="1.500"/>
<path d="M1858.600 1053.600 H1875 M1863.500 1053 V1050.800 H1870 V1053" fill="none" stroke="#d8d8d8" stroke-width="1.600"/>
<path d="M1864 1056.500 V1064.800 M1866.800 1056.500 V1064.800 M1869.600 1056.500 V1064.800" stroke="#d8d8d8" stroke-width="1.300"/>
</g>
</svg>
<!-- ===== document image ===== -->
<div class="a" style="left:414px;top:388px;width:587px;height:416px;background:#232323"></div>
<svg style="left:415px;top:389px" width="585" height="414" viewBox="0 0 585 414"><defs>
<clipPath id="imgclip"><rect width="585" height="414"/></clipPath>
<radialGradient id="imgbg" cx="0.66" cy="0.30" r="0.85"><stop offset="0" stop-color="#515151"/><stop offset="0.45" stop-color="#4a4a4a"/><stop offset="0.78" stop-color="#404040"/><stop offset="1" stop-color="#373737"/></radialGradient>
<linearGradient id="stone" x1="0.1" y1="0" x2="0.9" y2="1"><stop offset="0" stop-color="#f4f4f4"/><stop offset="0.5" stop-color="#e4e4e4"/><stop offset="0.85" stop-color="#c8c8c8"/><stop offset="1" stop-color="#a8a8a8"/></linearGradient>
<radialGradient id="duckbody" cx="0.55" cy="0.45" r="0.65"><stop offset="0" stop-color="#fbf6cc"/><stop offset="0.6" stop-color="#f6eeac"/><stop offset="1" stop-color="#eadc82"/></radialGradient>
<radialGradient id="duckhead" cx="441" cy="92" r="48" gradientUnits="userSpaceOnUse"><stop offset="0" stop-color="#efe372" stop-opacity="0.9"/><stop offset="0.7" stop-color="#f1e680" stop-opacity="0.55"/><stop offset="1" stop-color="#f4ea94" stop-opacity="0"/></radialGradient>
<linearGradient id="beakg" x1="0" y1="0" x2="1" y2="1"><stop offset="0" stop-color="#f2b750"/><stop offset="0.7" stop-color="#eba94e"/><stop offset="1" stop-color="#e0966a"/></linearGradient>
<filter id="sblur" x="-30%" y="-30%" width="160%" height="160%"><feGaussianBlur stdDeviation="4.5"/></filter>
<filter id="blur3" x="-30%" y="-60%" width="160%" height="220%"><feGaussianBlur stdDeviation="3"/></filter>
<filter id="soft" x="-5%" y="-5%" width="110%" height="110%"><feGaussianBlur stdDeviation="0.7"/></filter>
<filter id="grain" x="0" y="0" width="100%" height="100%"><feTurbulence type="fractalNoise" baseFrequency="0.3" numOctaves="3" seed="4" result="n"/><feColorMatrix in="n" type="matrix" values="0 0 0 0 0  0 0 0 0 0  0 0 0 0 0  0.8 0.8 0.8 0 -0.85" result="a"/><feComposite in="a" in2="SourceGraphic" operator="in"/></filter>
</defs><g clip-path="url(#imgclip)">
<rect width="585" height="414" fill="url(#imgbg)"/>
<defs>
<path id="s1" d="M-8.0 -8.0 C7.5 -15.8 38.7 -11.5 54.0 -8.0 C69.3 -4.5 54.8 -0.8 53.0 6.0 C51.2 12.8 51.0 13.6 47.0 19.0 C43.0 24.4 42.8 24.6 37.0 27.5 C31.2 30.4 30.8 30.2 24.0 30.5 C17.2 30.8 18.0 30.4 10.0 28.5 C2.0 26.6 -3.5 32.1 -8.0 23.0 C-12.5 13.9 -23.5 -0.2 -8.0 -8.0 Z"/><clipPath id="c1"><use href="#s1"/></clipPath>
<path id="s2" d="M96.0 -8.0 C71.0 -4.7 90.0 -1.5 87.0 5.0 C84.0 11.5 84.1 11.0 84.0 18.0 C83.9 25.0 84.2 26.7 86.5 33.0 C88.8 39.3 89.4 38.6 93.0 43.0 C96.6 47.4 96.0 46.7 101.0 50.5 C106.0 54.3 107.1 55.4 113.0 58.0 C118.9 60.6 117.7 61.4 124.5 61.0 C131.3 60.6 133.1 60.3 140.0 56.5 C146.9 52.7 145.7 51.9 152.0 46.0 C158.3 40.1 158.5 39.0 165.0 33.0 C171.5 27.0 172.5 27.0 178.0 22.0 C183.5 17.0 184.0 17.8 187.0 13.0 C190.0 8.2 190.0 8.3 190.0 3.0 C190.0 -2.3 210.5 -5.2 187.0 -8.0 C163.5 -10.8 121.0 -11.3 96.0 -8.0 Z"/><clipPath id="c2"><use href="#s2"/></clipPath>
<path id="s3" d="M221.7 4.3 C229.5 4.8 231.6 6.0 239.0 11.7 C246.4 17.4 249.4 19.4 251.4 27.2 C253.4 35.0 250.6 36.8 247.0 42.8 C243.4 48.8 242.4 48.2 237.0 51.0 C231.6 53.8 231.8 54.4 225.5 54.0 C219.2 53.6 217.8 53.9 212.0 49.6 C206.2 45.3 204.9 43.6 202.2 37.0 C199.5 30.4 199.7 30.1 201.2 23.3 C202.7 16.5 202.9 14.5 208.0 9.7 C213.1 4.9 213.9 3.8 221.7 4.3 Z"/><clipPath id="c3"><use href="#s3"/></clipPath>
<path id="s4" d="M179.0 44.3 C191.1 43.8 192.4 44.6 204.0 48.6 C215.6 52.6 217.3 52.5 225.5 60.3 C233.7 68.1 235.8 70.0 236.8 79.7 C237.8 89.4 234.1 91.4 229.4 99.0 C224.7 106.6 224.4 105.1 218.0 110.0 C211.6 114.9 213.3 115.4 204.0 118.6 C194.7 121.8 192.9 123.9 180.8 122.9 C168.7 121.9 166.2 120.7 155.5 114.7 C144.8 108.7 143.7 106.8 138.0 99.0 C132.3 91.2 132.6 91.9 132.6 83.6 C132.6 75.3 132.3 74.3 138.0 66.0 C143.7 57.7 145.2 55.9 155.5 50.5 C165.8 45.1 166.9 44.8 179.0 44.3 Z"/><clipPath id="c4"><use href="#s4"/></clipPath>
<path id="s5" d="M43.7 85.5 C44.7 80.1 43.5 79.6 48.6 75.8 C53.7 72.0 54.3 72.1 64.0 70.4 C73.7 68.7 76.2 68.3 87.5 69.0 C98.8 69.7 100.7 69.3 109.0 73.0 C117.3 76.7 115.9 77.1 120.5 83.6 C125.1 90.1 127.4 92.2 127.4 99.0 C127.4 105.8 127.1 105.9 120.5 110.8 C113.9 115.7 110.7 115.4 101.0 118.6 C91.3 121.8 91.4 123.0 81.7 123.5 C72.0 124.0 70.0 123.7 62.2 120.5 C54.4 117.3 54.9 116.6 50.5 110.8 C46.1 105.0 46.4 103.5 44.7 97.2 C43.0 90.9 42.7 90.9 43.7 85.5 Z"/><clipPath id="c5"><use href="#s5"/></clipPath>
<path id="s6" d="M-8.0 42.0 C-5.7 8.4 -3.0 42.9 1.0 45.5 C5.0 48.1 4.8 47.9 7.8 52.5 C10.8 57.1 11.1 58.1 13.0 64.0 C14.9 69.9 14.6 67.7 15.5 76.0 C16.4 84.3 15.3 85.1 16.5 97.2 C17.7 109.3 19.9 111.7 20.4 124.4 C20.9 137.1 21.2 136.6 18.5 147.8 C15.8 159.0 14.3 161.7 9.7 169.0 C5.1 176.3 4.4 174.2 0.0 177.0 C-4.4 179.8 -6.0 213.8 -8.0 180.0 C-10.0 146.2 -10.3 75.6 -8.0 42.0 Z"/><clipPath id="c6"><use href="#s6"/></clipPath>
<path id="s7" d="M98.2 143.9 C99.2 139.5 99.4 137.4 105.0 134.0 C110.6 130.6 112.7 132.7 120.5 130.3 C128.3 127.9 127.7 125.1 136.0 124.4 C144.3 123.7 145.3 124.5 153.6 127.4 C161.9 130.3 163.6 131.4 169.0 136.0 C174.4 140.6 174.5 139.4 175.0 145.8 C175.5 152.2 173.9 154.6 171.0 161.4 C168.1 168.2 168.1 169.3 163.3 173.0 C158.5 176.7 159.0 176.5 151.7 176.0 C144.4 175.5 143.3 175.2 134.0 171.0 C124.7 166.8 123.0 164.2 114.7 159.4 C106.4 154.6 105.1 155.6 101.0 151.7 C96.9 147.8 97.2 148.3 98.2 143.9 Z"/><clipPath id="c7"><use href="#s7"/></clipPath>
<path id="s8" d="M58.3 153.6 C66.3 151.7 67.1 153.1 73.9 157.5 C80.7 161.9 82.1 164.2 85.6 171.0 C89.1 177.8 88.8 176.9 87.9 184.7 C87.0 192.5 86.0 195.2 82.0 202.0 C78.0 208.8 77.5 208.5 72.0 212.0 C66.5 215.5 66.3 214.8 60.0 216.0 C53.7 217.2 53.2 217.6 46.7 216.6 C40.2 215.6 38.9 215.4 34.0 212.0 C29.1 208.6 28.9 207.3 27.0 203.0 C25.1 198.7 25.0 200.8 26.3 195.0 C27.6 189.2 28.1 187.5 32.0 180.0 C35.9 172.5 35.4 171.6 42.0 165.0 C48.6 158.4 50.3 155.5 58.3 153.6 Z"/><clipPath id="c8"><use href="#s8"/></clipPath>
<path id="s9" d="M124.4 181.8 C116.6 182.6 116.3 181.6 109.0 186.7 C101.7 191.8 100.1 193.5 95.3 202.2 C90.5 210.9 89.3 213.7 89.8 221.5 C90.3 229.3 91.4 228.4 97.2 233.2 C103.0 238.0 104.0 239.4 112.8 240.6 C121.6 241.8 122.5 241.3 132.2 238.0 C141.9 234.7 144.5 233.4 151.7 227.3 C158.9 221.2 158.8 219.0 161.0 213.7 C163.2 208.4 162.3 211.3 160.4 206.0 C158.5 200.7 158.7 198.1 153.6 192.5 C148.5 186.9 147.3 186.4 140.0 183.7 C132.7 181.0 132.2 181.0 124.4 181.8 Z"/><clipPath id="c9"><use href="#s9"/></clipPath>
<path id="s10" d="M-8.0 221.0 C-5.5 192.6 -2.9 221.9 2.0 224.5 C6.9 227.1 7.1 225.6 11.7 231.2 C16.3 236.8 17.5 237.5 20.4 246.8 C23.3 256.1 20.7 258.0 23.3 268.2 C25.9 278.4 29.2 277.9 30.7 287.6 C32.2 297.3 32.0 298.7 29.2 307.0 C26.4 315.3 24.3 314.4 19.4 320.7 C14.5 327.0 14.6 328.4 9.7 332.3 C4.8 336.2 4.4 334.8 0.0 336.2 C-4.4 337.6 -6.0 366.8 -8.0 338.0 C-10.0 309.2 -10.5 249.4 -8.0 221.0 Z"/><clipPath id="c10"><use href="#s10"/></clipPath>
<path id="s11" d="M68.0 251.6 C75.8 251.2 77.3 250.9 87.5 253.6 C97.7 256.3 98.7 257.7 108.9 262.3 C119.1 266.9 121.7 266.6 128.3 272.0 C134.9 277.4 134.6 277.4 135.1 283.7 C135.6 290.0 136.9 290.0 130.3 297.3 C123.7 304.6 120.6 307.0 108.9 312.9 C97.2 318.8 95.3 318.0 83.6 320.7 C71.9 323.4 70.7 323.6 62.2 323.6 C53.7 323.6 53.6 324.4 49.6 320.7 C45.6 317.0 46.8 315.3 46.3 309.0 C45.8 302.7 47.9 302.7 47.6 295.4 C47.3 288.1 44.8 287.6 45.1 279.8 C45.4 272.0 45.8 270.5 48.6 264.3 C51.4 258.1 51.5 258.2 56.4 255.0 C61.3 251.8 60.2 252.0 68.0 251.6 Z"/><clipPath id="c11"><use href="#s11"/></clipPath>
<path id="s12" d="M-8.0 341.0 C-5.2 320.7 -3.9 342.3 3.0 344.0 C9.9 345.7 10.4 346.2 19.4 347.9 C28.4 349.6 27.7 349.8 38.9 350.8 C50.1 351.8 52.5 350.1 64.2 351.8 C75.9 353.5 76.8 353.2 85.6 357.6 C94.4 362.0 94.8 362.5 99.2 369.3 C103.6 376.1 102.8 377.0 103.0 384.8 C103.2 392.6 102.5 393.1 100.1 400.4 C97.7 407.7 96.3 407.8 93.3 414.0 C90.3 420.2 113.3 422.2 88.0 425.0 C62.7 427.8 16.0 446.0 -8.0 425.0 C-32.0 404.0 -10.8 361.3 -8.0 341.0 Z"/><clipPath id="c12"><use href="#s12"/></clipPath>
<filter id="rimblur" x="-20%" y="-20%" width="140%" height="140%"><feGaussianBlur stdDeviation="3.2"/></filter>
</defs>
<g filter="url(#sblur)" fill="#141414" opacity="0.75" transform="translate(7 7.500)">
<use href="#s1"/>
<use href="#s2"/>
<use href="#s3"/>
<use href="#s4"/>
<use href="#s5"/>
<use href="#s6"/>
<use href="#s7"/>
<use href="#s8"/>
<use href="#s9"/>
<use href="#s10"/>
<use href="#s11"/>
<use href="#s12"/>
</g>
<g filter="url(#soft)">
<use href="#s1" fill="url(#stone)"/>
<use href="#s2" fill="url(#stone)"/>
<use href="#s3" fill="url(#stone)"/>
<use href="#s4" fill="url(#stone)"/>
<use href="#s5" fill="url(#stone)"/>
<use href="#s6" fill="url(#stone)"/>
<use href="#s7" fill="url(#stone)"/>
<use href="#s8" fill="url(#stone)"/>
<use href="#s9" fill="url(#stone)"/>
<use href="#s10" fill="url(#stone)"/>
<use href="#s11" fill="url(#stone)"/>
<use href="#s12" fill="url(#stone)"/>
</g>
<g filter="url(#soft)">
<use href="#s6" fill="#6a6a6a" opacity="0.18"/>
<use href="#s10" fill="#6a6a6a" opacity="0.34"/>
<use href="#s12" fill="#6a6a6a" opacity="0.22"/>
<use href="#s1" fill="#6a6a6a" opacity="0.06"/>
<use href="#s11" fill="#6a6a6a" opacity="0.1"/>
<use href="#s8" fill="#6a6a6a" opacity="0.04"/>
</g>
<g clip-path="url(#c1)"><use href="#s1" fill="none" stroke="#5a5a5a" stroke-width="7" opacity="0.42" filter="url(#rimblur)" transform="translate(1.500 1.500)"/></g>
<g clip-path="url(#c2)"><use href="#s2" fill="none" stroke="#5a5a5a" stroke-width="7" opacity="0.42" filter="url(#rimblur)" transform="translate(1.500 1.500)"/></g>
<g clip-path="url(#c3)"><use href="#s3" fill="none" stroke="#5a5a5a" stroke-width="7" opacity="0.42" filter="url(#rimblur)" transform="translate(1.500 1.500)"/></g>
<g clip-path="url(#c4)"><use href="#s4" fill="none" stroke="#5a5a5a" stroke-width="7" opacity="0.42" filter="url(#rimblur)" transform="translate(1.500 1.500)"/></g>
<g clip-path="url(#c5)"><use href="#s5" fill="none" stroke="#5a5a5a" stroke-width="7" opacity="0.42" filter="url(#rimblur)" transform="translate(1.500 1.500)"/></g>
<g clip-path="url(#c6)"><use href="#s6" fill="none" stroke="#5a5a5a" stroke-width="7" opacity="0.42" filter="url(#rimblur)" transform="translate(1.500 1.500)"/></g>
<g clip-path="url(#c7)"><use href="#s7" fill="none" stroke="#5a5a5a" stroke-width="7" opacity="0.42" filter="url(#rimblur)" transform="translate(1.500 1.500)"/></g>
<g clip-path="url(#c8)"><use href="#s8" fill="none" stroke="#5a5a5a" stroke-width="7" opacity="0.42" filter="url(#rimblur)" transform="translate(1.500 1.500)"/></g>
<g clip-path="url(#c9)"><use href="#s9" fill="none" stroke="#5a5a5a" stroke-width="7" opacity="0.42" filter="url(#rimblur)" transform="translate(1.500 1.500)"/></g>
<g clip-path="url(#c10)"><use href="#s10" fill="none" stroke="#5a5a5a" stroke-width="7" opacity="0.42" filter="url(#rimblur)" transform="translate(1.500 1.500)"/></g>
<g clip-path="url(#c11)"><use href="#s11" fill="none" stroke="#5a5a5a" stroke-width="7" opacity="0.42" filter="url(#rimblur)" transform="translate(1.500 1.500)"/></g>
<g clip-path="url(#c12)"><use href="#s12" fill="none" stroke="#5a5a5a" stroke-width="7" opacity="0.42" filter="url(#rimblur)" transform="translate(1.500 1.500)"/></g>
<g filter="url(#grain)" opacity="0.17">
<use href="#s1" fill="#666"/>
<use href="#s2" fill="#666"/>
<use href="#s3" fill="#666"/>
<use href="#s4" fill="#666"/>
<use href="#s5" fill="#666"/>
<use href="#s6" fill="#666"/>
<use href="#s7" fill="#666"/>
<use href="#s8" fill="#666"/>
<use href="#s9" fill="#666"/>
<use href="#s10" fill="#666"/>
<use href="#s11" fill="#666"/>
<use href="#s12" fill="#666"/>
</g>
<g filter="url(#soft)">
<path d="M411.0 305.0 C412.5 298.8 418.5 299.3 421.8 305.0 C425.1 310.7 422.4 319.3 424.0 327.8 C425.6 336.3 423.8 334.7 428.0 338.9 C432.2 343.1 431.9 341.9 440.7 344.4 C449.5 346.9 456.4 346.9 463.0 349.0 C469.6 351.1 471.7 350.4 467.2 352.8 C462.7 355.2 454.4 356.9 445.0 358.4 C435.6 359.9 440.1 359.3 429.6 358.6 C419.1 357.9 410.0 357.7 403.0 355.8 C396.0 353.9 400.0 354.0 401.5 351.0 C403.0 348.0 408.5 346.2 409.0 344.0 C409.5 341.8 404.4 343.8 403.5 342.2 C402.6 340.6 402.8 338.4 405.6 337.6 C408.4 336.8 412.0 341.0 414.5 339.0 C417.0 337.0 416.6 338.1 415.7 329.6 C414.8 321.1 409.5 311.2 411.0 305.0 Z" fill="#e9a43a"/>
<path d="M359.3 308.0 C362.5 302.7 373.1 302.6 376.9 308.0 C380.7 313.4 374.6 319.6 374.5 329.6 C374.4 339.6 374.9 341.0 376.5 348.0 C378.1 355.0 378.1 354.1 381.0 357.4 C383.9 360.7 382.3 359.6 388.0 361.0 C393.7 362.4 395.5 361.3 403.7 363.0 C411.9 364.7 420.7 364.8 420.8 367.6 C420.9 370.4 413.4 371.7 404.0 374.0 C394.6 376.3 393.3 376.0 383.3 376.6 C373.3 377.2 370.1 377.6 364.0 376.2 C357.9 374.8 359.6 374.1 359.0 371.0 C358.4 367.9 359.4 369.8 361.5 364.0 C363.6 358.2 366.9 356.8 367.5 348.0 C368.1 339.2 366.1 339.0 364.0 329.0 C361.9 319.0 356.1 313.3 359.3 308.0 Z" fill="#eba53a"/>
<path d="M438.3 52.5 C444.8 52.5 445.9 52.8 453.0 55.5 C460.1 58.2 461.0 58.4 466.7 63.3 C472.4 68.2 473.5 69.3 475.8 75.0 C478.1 80.7 477.5 80.7 476.0 86.0 C474.5 91.3 473.5 91.5 470.0 96.0 C466.5 100.5 465.5 99.5 462.0 104.0 C458.5 108.5 457.8 109.2 456.0 114.0 C454.2 118.8 457.0 119.9 455.0 123.3 C453.0 126.7 451.3 126.2 448.0 127.5 C444.7 128.8 443.1 125.6 441.7 128.3 C440.3 131.0 441.2 132.0 442.5 138.3 C443.8 144.6 444.0 145.4 446.7 153.3 C449.4 161.2 450.0 160.8 453.3 170.0 C456.6 179.2 456.6 181.6 460.0 190.0 C463.4 198.4 463.2 196.6 466.7 203.7 C470.2 210.8 471.1 211.5 474.0 218.5 C476.9 225.5 477.6 225.5 478.1 231.5 C478.6 237.5 476.8 236.0 475.9 242.6 C475.0 249.2 475.2 249.4 474.5 258.0 C473.8 266.6 474.4 275.9 473.1 276.9 C471.8 277.9 472.0 268.7 469.5 262.0 C467.0 255.3 466.5 251.3 463.0 250.0 C459.5 248.7 460.3 251.0 455.6 257.0 C450.9 263.0 450.9 265.6 444.4 274.0 C437.9 282.4 437.0 282.8 429.6 290.7 C422.2 298.6 423.1 300.0 414.8 305.6 C406.5 311.2 405.6 310.9 396.3 313.0 C387.0 315.1 388.0 315.3 377.8 313.9 C367.6 312.5 364.9 312.3 355.6 307.4 C346.3 302.5 347.2 301.8 340.7 294.4 C334.2 287.0 333.5 286.6 329.6 277.8 C325.7 269.0 325.5 268.6 325.0 259.3 C324.5 250.0 324.8 250.4 327.8 240.7 C330.8 231.0 331.0 229.7 337.0 220.4 C343.0 211.1 345.3 211.3 351.9 203.7 C358.5 196.1 356.3 197.6 363.3 190.0 C370.3 182.4 372.5 180.8 380.0 173.3 C387.5 165.8 387.5 167.5 393.3 160.0 C399.1 152.5 399.9 152.5 403.3 143.3 C406.7 134.1 406.3 130.0 406.7 123.3 C407.1 116.6 405.2 123.4 405.0 116.7 C404.8 110.0 405.2 106.3 406.0 96.7 C406.8 87.1 405.6 86.7 408.3 78.3 C411.0 69.9 412.0 69.0 416.7 63.3 C421.4 57.6 421.6 58.2 427.0 55.5 C432.4 52.8 431.8 52.5 438.3 52.5 Z" fill="url(#duckbody)"/>
<path d="M438.3 52.5 C444.8 52.5 445.9 52.8 453.0 55.5 C460.1 58.2 461.0 58.4 466.7 63.3 C472.4 68.2 473.5 69.3 475.8 75.0 C478.1 80.7 477.5 80.7 476.0 86.0 C474.5 91.3 473.5 91.5 470.0 96.0 C466.5 100.5 465.5 99.5 462.0 104.0 C458.5 108.5 457.8 109.2 456.0 114.0 C454.2 118.8 457.0 119.9 455.0 123.3 C453.0 126.7 451.3 126.2 448.0 127.5 C444.7 128.8 443.1 125.6 441.7 128.3 C440.3 131.0 441.2 132.0 442.5 138.3 C443.8 144.6 444.0 145.4 446.7 153.3 C449.4 161.2 450.0 160.8 453.3 170.0 C456.6 179.2 456.6 181.6 460.0 190.0 C463.4 198.4 463.2 196.6 466.7 203.7 C470.2 210.8 471.1 211.5 474.0 218.5 C476.9 225.5 477.6 225.5 478.1 231.5 C478.6 237.5 476.8 236.0 475.9 242.6 C475.0 249.2 475.2 249.4 474.5 258.0 C473.8 266.6 474.4 275.9 473.1 276.9 C471.8 277.9 472.0 268.7 469.5 262.0 C467.0 255.3 466.5 251.3 463.0 250.0 C459.5 248.7 460.3 251.0 455.6 257.0 C450.9 263.0 450.9 265.6 444.4 274.0 C437.9 282.4 437.0 282.8 429.6 290.7 C422.2 298.6 423.1 300.0 414.8 305.6 C406.5 311.2 405.6 310.9 396.3 313.0 C387.0 315.1 388.0 315.3 377.8 313.9 C367.6 312.5 364.9 312.3 355.6 307.4 C346.3 302.5 347.2 301.8 340.7 294.4 C334.2 287.0 333.5 286.6 329.6 277.8 C325.7 269.0 325.5 268.6 325.0 259.3 C324.5 250.0 324.8 250.4 327.8 240.7 C330.8 231.0 331.0 229.7 337.0 220.4 C343.0 211.1 345.3 211.3 351.9 203.7 C358.5 196.1 356.3 197.6 363.3 190.0 C370.3 182.4 372.5 180.8 380.0 173.3 C387.5 165.8 387.5 167.5 393.3 160.0 C399.1 152.5 399.9 152.5 403.3 143.3 C406.7 134.1 406.3 130.0 406.7 123.3 C407.1 116.6 405.2 123.4 405.0 116.7 C404.8 110.0 405.2 106.3 406.0 96.7 C406.8 87.1 405.6 86.7 408.3 78.3 C411.0 69.9 412.0 69.0 416.7 63.3 C421.4 57.6 421.6 58.2 427.0 55.5 C432.4 52.8 431.8 52.5 438.3 52.5 Z" fill="url(#duckhead)"/>
<ellipse cx="436" cy="117" rx="17" ry="5" fill="#c9b458" opacity="0.450" transform="rotate(-12 436 117)" filter="url(#blur3)"/>
<path d="M456.0 119.5 C456.1 117.2 456.0 114.5 458.5 114.5 C461.0 114.5 462.4 117.2 466.0 119.5 C469.6 121.8 469.7 121.5 473.0 123.5 C476.3 125.5 476.5 125.2 479.0 127.5 C481.5 129.8 482.1 130.3 482.8 132.5 C483.5 134.7 483.4 135.6 481.8 136.3 C480.2 137.0 480.4 137.1 476.5 135.2 C472.6 133.3 470.9 131.7 466.3 128.8 C461.7 125.9 460.6 125.8 458.0 123.5 C455.4 121.2 455.9 121.8 456.0 119.5 Z" fill="#f4d3a4"/>
<path d="M459.0 115.5 C460.3 114.5 462.5 116.0 466.0 117.5 C469.5 119.0 469.5 119.2 473.0 121.5 C476.5 123.8 477.9 123.7 480.0 126.5 C482.1 129.3 482.3 131.2 481.3 132.5 C480.3 133.8 479.3 133.0 476.0 131.5 C472.7 130.0 471.8 129.0 468.0 126.5 C464.2 124.0 463.3 124.3 461.0 121.5 C458.7 118.7 457.7 116.5 459.0 115.5 Z" fill="#e39a86"/>
<path d="M466.3 94.0 C469.4 94.8 470.6 97.5 474.4 102.1 C478.2 106.7 478.4 107.4 481.6 112.3 C484.8 117.2 485.5 118.2 487.2 121.5 C488.9 124.8 489.0 123.8 488.3 125.6 C487.6 127.4 486.8 128.7 484.6 128.7 C482.4 128.7 482.8 128.0 479.5 125.5 C476.2 123.0 475.4 121.4 471.4 118.6 C467.4 115.8 466.8 115.2 463.5 114.2 C460.2 113.2 459.2 116.4 458.2 114.5 C457.2 112.6 458.5 110.4 459.5 106.5 C460.5 102.6 460.5 102.1 462.2 99.0 C463.9 95.9 463.2 93.2 466.3 94.0 Z" fill="url(#beakg)"/>
<circle cx="474.800" cy="112.800" r="1" fill="#b06a30"/>
<path d="M374 250 C369 258 364 268 364.500 279 C366 272 371 262 376.500 254 Z" fill="#c9a860" opacity="0.800"/>
<path d="M466 236 C469 245 471.500 260 473 276 C470 262 467 250 463.500 242 Z" fill="#cdb068" opacity="0.700"/>
</g>
<circle cx="447.500" cy="86.300" r="5.600" fill="#c9bb52"/>
<circle cx="447.600" cy="86.400" r="4.500" fill="#0c0a08"/>
<circle cx="446.300" cy="85" r="0.900" fill="#6a6a60"/>
</g></svg>
<!-- ===== text ===== -->
<span class="t" id="t0" style="left:70.90px;top:9.83px;font-size:17.8px;color:#dddddd;transform:scaleX(0.8759);">File</span>
<span class="t" id="t1" style="left:120.00px;top:9.83px;font-size:17.8px;color:#dddddd;transform:scaleX(0.9367);">Edit</span>
<span class="t" id="t2" style="left:173.00px;top:9.83px;font-size:17.8px;color:#dddddd;transform:scaleX(0.9834);">Image</span>
<span class="t" id="t3" style="left:243.40px;top:9.83px;font-size:17.8px;color:#dddddd;transform:scaleX(0.9127);">Layer</span>
<span class="t" id="t4" style="left:307.50px;top:9.83px;font-size:17.8px;color:#dddddd;transform:scaleX(0.9724);">Type</span>
<span class="t" id="t5" style="left:367.50px;top:9.83px;font-size:17.8px;color:#dddddd;transform:scaleX(0.9206);">Select</span>
<span class="t" id="t6" style="left:437.25px;top:9.83px;font-size:17.8px;color:#dddddd;transform:scaleX(0.9300);">Filter</span>
<span class="t" id="t7" style="left:497.80px;top:9.83px;font-size:17.8px;color:#dddddd;transform:scaleX(0.9501);">3D</span>
<span class="t" id="t8" style="left:542.25px;top:9.83px;font-size:17.8px;color:#dddddd;transform:scaleX(0.9612);">View</span>
<span class="t" id="t9" style="left:601.50px;top:9.83px;font-size:17.8px;color:#dddddd;transform:scaleX(1.0292);">Window</span>
<span class="t" id="t10" style="left:689.00px;top:9.83px;font-size:17.8px;color:#dddddd;transform:scaleX(0.9569);">Help</span>
<span class="t" id="t11" style="left:353.50px;top:57.13px;font-size:15.5px;color:#dddddd;transform:scaleX(0.8987);">Patch:</span>
<span class="t" id="t12" style="left:415.00px;top:57.33px;font-size:15.5px;color:#dddddd;transform:scaleX(0.9504);">Content-Aware</span>
<span class="t" id="t13" style="left:567.50px;top:57.13px;font-size:15.5px;color:#dddddd;transform:scaleX(0.9389);">Structure:</span>
<span class="t" id="t14" style="left:640.00px;top:57.33px;font-size:15.5px;color:#dddddd;transform:scaleX(0.9275);">4</span>
<span class="t" id="t15" style="left:694.75px;top:57.13px;font-size:15.5px;color:#dddddd;transform:scaleX(0.9248);">Color:</span>
<span class="t" id="t16" style="left:744.00px;top:57.33px;font-size:15.5px;color:#dddddd;transform:scaleX(0.9275);">0</span>
<span class="t" id="t17" style="left:127.30px;top:107.63px;font-size:15.5px;color:#f0f0f0;font-weight:bold;transform:scaleX(1.0625);">Untitled-2 @ 16.7% (duck-removebg-preview, RGB/8) *</span>
<span class="t" id="t18" style="left:120.80px;top:1056.80px;font-size:15px;color:#f0f0f0;transform:scaleX(0.9985);">16.67%</span>
<span class="t" id="t19" style="left:249.40px;top:1056.80px;font-size:15px;color:#c8c8c8;transform:scaleX(0.9840);">Doc: 24.9M/63.1M</span>
<span class="t" id="t20" style="left:1450.30px;top:135.80px;font-size:15px;color:#f0f0f0;font-weight:bold;transform:scaleX(0.9369);">Color</span>
<span class="t" id="t21" style="left:1450.30px;top:177.65px;font-size:15px;color:#f0f0f0;font-weight:bold;transform:scaleX(0.9263);">Swatches</span>
<span class="t" id="t22" style="left:1450.70px;top:239.80px;font-size:15px;color:#f0f0f0;font-weight:bold;transform:scaleX(0.9374);">Learn</span>
<span class="t" id="t23" style="left:1450.70px;top:281.80px;font-size:15px;color:#f0f0f0;font-weight:bold;transform:scaleX(0.9310);">Libraries</span>
<span class="t" id="t24" style="left:1450.30px;top:323.80px;font-size:15px;color:#f0f0f0;font-weight:bold;transform:scaleX(0.9830);">Adjustments</span>
<span class="t" id="t25" style="left:1579.40px;top:120.40px;font-size:15px;color:#f0f0f0;font-weight:bold;transform:scaleX(0.9168);">Layers</span>
<span class="t" id="t26" style="left:1651.00px;top:120.40px;font-size:15px;color:#a8a8a8;font-weight:bold;transform:scaleX(0.9294);">Channels</span>
<span class="t" id="t27" style="left:1744.60px;top:120.40px;font-size:15px;color:#a8a8a8;font-weight:bold;transform:scaleX(0.9276);">Paths</span>
<span class="t" id="t28" style="left:1604.40px;top:170.23px;font-size:15.5px;color:#dddddd;transform:scaleX(0.8894);">Kind</span>
<span class="t" id="t29" style="left:1583.50px;top:212.33px;font-size:15.5px;color:#dddddd;transform:scaleX(0.9509);">Normal</span>
<span class="t" id="t30" style="left:1774.00px;top:212.43px;font-size:15.5px;color:#dddddd;transform:scaleX(0.9743);">Opacity:</span>
<span class="t" id="t31" style="left:1843.00px;top:212.43px;font-size:15.5px;color:#f0f0f0;transform:scaleX(0.9481);">100%</span>
<span class="t" id="t32" style="left:1574.40px;top:253.63px;font-size:15.5px;color:#dddddd;transform:scaleX(0.9767);">Lock:</span>
<span class="t" id="t33" style="left:1808.60px;top:253.53px;font-size:15.5px;color:#dddddd;transform:scaleX(0.8627);">Fill:</span>
<span class="t" id="t34" style="left:1843.00px;top:253.83px;font-size:15.5px;color:#f0f0f0;transform:scaleX(0.9481);">100%</span>
<span class="t" id="t35" style="left:1678.80px;top:302.03px;font-size:15.5px;color:#f0f0f0;transform:scaleX(0.9667);">duck-removebg-preview</span>
<span class="t" id="t36" style="left:1678.80px;top:351.63px;font-size:15.5px;color:#f0f0f0;transform:scaleX(0.9322);">Layer 1</span>
<span class="t" id="t37" style="left:1679.00px;top:401.03px;font-size:15.5px;color:#f0f0f0;font-style:italic;transform:scaleX(0.9549);">Background</span>
</body></html>
